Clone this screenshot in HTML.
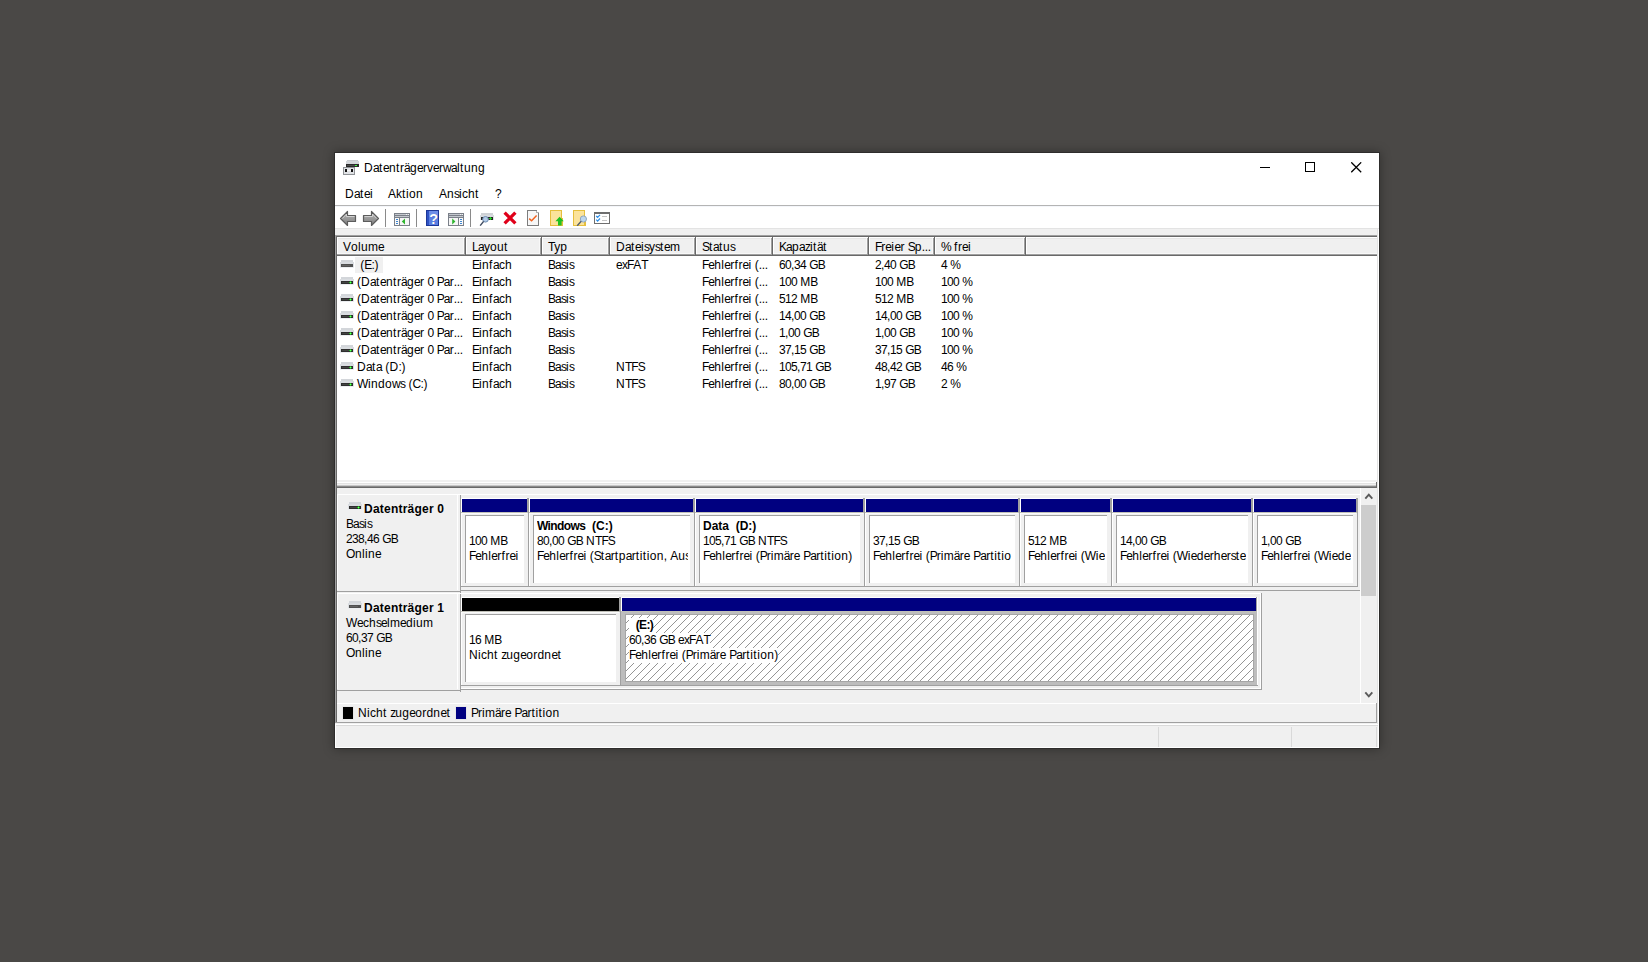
<!DOCTYPE html>
<html><head><meta charset="utf-8"><style>
html,body{margin:0;padding:0;width:1648px;height:962px;overflow:hidden;background:#4a4846;}
body>div,body>svg{position:absolute;}
.t{position:absolute;font-family:"Liberation Sans",sans-serif;font-size:12px;line-height:15px;color:#000;white-space:pre;}
</style></head><body>
<div style="left:334px;top:152px;width:1046px;height:597px;background:#2e2d2c;box-shadow:0 0 10px rgba(0,0,0,.35);"></div>
<div style="left:335px;top:153px;width:1044px;height:595px;background:#fff;"></div>
<svg style="left:343px;top:160px" width="16" height="16" viewBox="0 0 16 16" shape-rendering="crispEdges">
<rect x="4" y="0" width="11" height="1" fill="#c9ccd0"/>
<rect x="3" y="1" width="13" height="3" fill="#d4d7db"/>
<rect x="3" y="4" width="13" height="3" fill="#2b2b2b"/>
<rect x="4" y="5" width="8" height="1" fill="#4a4a4a"/>
<rect x="12" y="5" width="2" height="1" fill="#3dff3d"/>
<rect x="0" y="7" width="12" height="8" fill="#8f9296"/>
<rect x="1" y="8" width="10" height="6" fill="#e1e3e6"/>
<rect x="2" y="9" width="2" height="3" fill="#111"/>
<rect x="8" y="9" width="2" height="3" fill="#111"/>
<rect x="4" y="10" width="4" height="1" fill="#f8f8f8"/>
</svg>
<div class="t" style="left:364px;top:161px;"><span style="letter-spacing:0.334px">D</span><span style="letter-spacing:-0.674px">a</span><span style="letter-spacing:0.666px">t</span><span style="letter-spacing:-0.674px">e</span><span style="letter-spacing:0.326px">n</span><span style="letter-spacing:0.666px">t</span><span style="letter-spacing:0.004px">r</span><span style="letter-spacing:-0.674px">ä</span><span style="letter-spacing:0.326px">g</span><span style="letter-spacing:-0.674px">e</span><span style="letter-spacing:0.004px">r</span>v<span style="letter-spacing:-0.674px">e</span><span style="letter-spacing:0.004px">r</span><span style="letter-spacing:-0.666px">w</span><span style="letter-spacing:-0.674px">a</span><span style="letter-spacing:0.334px">l</span><span style="letter-spacing:0.666px">t</span><span style="letter-spacing:0.326px">ung</span></div>
<div style="left:1260px;top:167px;width:10px;height:1px;background:#000;"></div>
<div style="left:1305px;top:162px;width:10px;height:10px;background:transparent;border:1px solid #000;box-sizing:border-box;"></div>
<svg style="left:1351px;top:162px" width="11" height="11" viewBox="0 0 11 11"><path d="M0.3 0.3L10.2 10.2M10.2 0.3L0.3 10.2" stroke="#000" stroke-width="1.25" fill="none"/></svg>
<div class="t" style="left:345px;top:187px;"><span style="letter-spacing:0.334px">D</span><span style="letter-spacing:-0.674px">a</span><span style="letter-spacing:0.666px">t</span><span style="letter-spacing:-0.674px">e</span><span style="letter-spacing:0.334px">i</span></div>
<div class="t" style="left:388px;top:187px;"><span style="letter-spacing:-0.004px">A</span>k<span style="letter-spacing:0.666px">t</span><span style="letter-spacing:0.334px">i</span><span style="letter-spacing:0.326px">on</span></div>
<div class="t" style="left:439px;top:187px;"><span style="letter-spacing:-0.004px">A</span><span style="letter-spacing:0.326px">n</span><span style="letter-spacing:-1px">s</span><span style="letter-spacing:0.334px">i</span>c<span style="letter-spacing:0.326px">h</span><span style="letter-spacing:0.666px">t</span></div>
<div class="t" style="left:495px;top:187px;"><span style="letter-spacing:-1.0px">?</span></div>
<div style="left:335px;top:205px;width:1044px;height:1px;background:#b4b4b4;"></div>
<div style="left:335px;top:206px;width:1044px;height:1px;background:#f4f6fa;"></div>
<div style="left:335px;top:228px;width:1044px;height:1px;background:#e3e3e3;"></div>
<div style="left:335px;top:229px;width:1044px;height:519px;background:#f0f0f0;"></div>
<div style="left:1378px;top:229px;width:1px;height:519px;background:#fff;"></div>
<div style="left:385px;top:209px;width:1px;height:18px;background:#8a8a8a;"></div>
<div style="left:416px;top:209px;width:1px;height:18px;background:#8a8a8a;"></div>
<div style="left:470px;top:209px;width:1px;height:18px;background:#8a8a8a;"></div>
<svg style="left:339px;top:210px" width="18" height="17" viewBox="0 0 18 17">
<defs><linearGradient id="ga" x1="0" y1="0" x2="0" y2="1"><stop offset="0" stop-color="#b8b8b8"/><stop offset="1" stop-color="#7c7c7c"/></linearGradient></defs>
<path d="M1.5 8.5L8.5 1.5V5.5H16.5V11.5H8.5V15.5Z" fill="url(#ga)" stroke="#5c5c5c" stroke-width="1.2" stroke-linejoin="round"/>
<path d="M3.3 8.5L7.5 4.2V6.5H15.5" fill="none" stroke="#dcdcdc" stroke-width="0.8"/>
</svg>
<svg style="left:362px;top:210px" width="18" height="17" viewBox="0 0 18 17">
<path d="M16.5 8.5L9.5 1.5V5.5H1.5V11.5H9.5V15.5Z" fill="url(#ga)" stroke="#5c5c5c" stroke-width="1.2" stroke-linejoin="round"/>
<path d="M14.7 8.5L10.5 4.2V6.5H2.5" fill="none" stroke="#dcdcdc" stroke-width="0.8"/>
</svg>
<svg style="left:394px;top:213px" width="16" height="13" viewBox="0 0 16 13" shape-rendering="crispEdges">
<rect x="0" y="0" width="16" height="13" fill="#7b8089"/>
<rect x="1" y="1" width="14" height="1" fill="#c3c7cd"/>
<rect x="12" y="1" width="1" height="1" fill="#f4f4f4"/><rect x="14" y="1" width="1" height="1" fill="#f4f4f4"/>
<rect x="1" y="3" width="14" height="1" fill="#c3c7cd"/>
<rect x="1" y="5" width="4" height="7" fill="#fafafa"/>
<rect x="2" y="6" width="2" height="1" fill="#3f86d0"/><rect x="2" y="8" width="2" height="1" fill="#3f86d0"/><rect x="2" y="10" width="2" height="1" fill="#3f86d0"/>
<rect x="6" y="5" width="9" height="7" fill="#f6f6f6"/>
<path d="M7.8 8.5L11 5.6V11.4Z" fill="#2fb52f" shape-rendering="auto"/>
</svg>
<svg style="left:426px;top:210px" width="13" height="16" viewBox="0 0 13 16" shape-rendering="crispEdges">
<rect x="0" y="0" width="13" height="16" fill="#1d3799"/>
<rect x="1" y="1" width="2" height="14" fill="#2f53c4"/>
<rect x="3" y="1" width="9" height="14" fill="#5b7fe2"/>
<rect x="3" y="1" width="9" height="5" fill="#6e8ee8"/>
<text x="8.3" y="14.2" font-family="Liberation Sans" font-weight="bold" font-size="14.5" fill="#1b2a70" text-anchor="middle" shape-rendering="auto" opacity=".55">?</text>
<text x="7.6" y="13.6" font-family="Liberation Sans" font-weight="bold" font-size="14.5" fill="#fff" text-anchor="middle" shape-rendering="auto">?</text>
</svg>
<svg style="left:448px;top:213px" width="16" height="13" viewBox="0 0 16 13" shape-rendering="crispEdges">
<rect x="0" y="0" width="16" height="13" fill="#7b8089"/>
<rect x="1" y="1" width="14" height="1" fill="#c3c7cd"/>
<rect x="12" y="1" width="1" height="1" fill="#f4f4f4"/><rect x="14" y="1" width="1" height="1" fill="#f4f4f4"/>
<rect x="1" y="3" width="14" height="1" fill="#c3c7cd"/>
<rect x="11" y="5" width="4" height="7" fill="#fafafa"/>
<rect x="12" y="6" width="2" height="1" fill="#3f86d0"/><rect x="12" y="8" width="2" height="1" fill="#3f86d0"/><rect x="12" y="10" width="2" height="1" fill="#3f86d0"/>
<rect x="1" y="5" width="9" height="7" fill="#f6f6f6"/>
<path d="M4.2 5.6L7.4 8.5L4.2 11.4Z" fill="#2fb52f" shape-rendering="auto"/>
</svg>
<svg style="left:479px;top:212px" width="16" height="16" viewBox="0 0 16 16">
<rect x="2" y="1" width="12" height="2" fill="#cfd2d6" shape-rendering="crispEdges"/>
<rect x="1" y="3" width="14" height="2" fill="#d8dbdf" shape-rendering="crispEdges"/>
<rect x="1" y="5" width="14" height="3" fill="#dfe2e5" shape-rendering="crispEdges"/>
<rect x="2" y="5" width="12" height="3" fill="#262626" shape-rendering="crispEdges"/>
<rect x="10" y="6" width="3" height="1" fill="#22d022" shape-rendering="crispEdges"/><rect x="11" y="5" width="1" height="3" fill="#22d022" shape-rendering="crispEdges"/>
<circle cx="6.5" cy="7.3" r="2.8" fill="#b4cbe6" stroke="#6d8db3" stroke-width="1"/>
<path d="M4.6 9.4L1.2 13.6" stroke="#3e4a60" stroke-width="1.5"/>
</svg>
<svg style="left:502px;top:210px" width="16" height="16" viewBox="0 0 16 16"><path d="M2.6 2.6L13.4 13.4M13.4 2.6L2.6 13.4" stroke="#e0001a" stroke-width="3.3" stroke-linecap="butt"/></svg>
<svg style="left:527px;top:210px" width="12" height="16" viewBox="0 0 12 16" shape-rendering="crispEdges">
<path d="M0.5 0.5H9.5L11.5 2.5V15.5H0.5Z" fill="#f7f7f7" stroke="#7d7d7d" stroke-width="1"/>
<path d="M9.5 0.5V2.5H11.5" fill="#fff" stroke="#b0b0b0" stroke-width="1"/>
<path d="M2.2 8.6L4.6 10.8L9.6 5.6" fill="none" stroke="#f2621e" stroke-width="1.5" shape-rendering="auto"/>
</svg>
<svg style="left:550px;top:210px" width="15" height="16" viewBox="0 0 15 16" shape-rendering="crispEdges">
<rect x="0" y="0" width="12" height="16" fill="#e6bf3c"/>
<rect x="1" y="1" width="10" height="14" fill="#fbe39b"/>
<rect x="11" y="8" width="2" height="8" fill="#e6bf3c"/>
<path d="M9.6 6.8L13.8 11.2H11.6V15.6H8.0V11.2H5.4Z" fill="#1fc11f" shape-rendering="auto"/>
</svg>
<svg style="left:573px;top:210px" width="14" height="16" viewBox="0 0 14 16">
<rect x="0" y="0" width="12" height="16" fill="#e6bf3c" shape-rendering="crispEdges"/>
<rect x="1" y="1" width="10" height="14" fill="#fbe39b" shape-rendering="crispEdges"/>
<rect x="11" y="9" width="2" height="7" fill="#e6bf3c" shape-rendering="crispEdges"/>
<circle cx="10.4" cy="9" r="3.1" fill="#bcd6ee" stroke="#8da6bf" stroke-width="1"/>
<path d="M8.2 11.3L4.2 15.8" stroke="#4f5a6e" stroke-width="1.3"/>
</svg>
<svg style="left:594px;top:212px" width="16" height="12" viewBox="0 0 16 12" shape-rendering="crispEdges">
<rect x="0" y="0" width="16" height="12" fill="#6e6e6e"/>
<rect x="1" y="2" width="14" height="9" fill="#fff"/>
<path d="M2.2 4L3.6 5.4L6 2.8M2.2 7.7L3.6 9.1L6 6.5" fill="none" stroke="#2d8fe8" stroke-width="1.2" shape-rendering="auto"/>
<rect x="8" y="4" width="5" height="1" fill="#c4c4c4"/>
<rect x="8" y="8" width="5" height="1" fill="#c4c4c4"/>
</svg>
<div style="left:335px;top:235px;width:1043px;height:1px;background:#a0a0a0;"></div>
<div style="left:336px;top:236px;width:1041px;height:1px;background:#696969;"></div>
<div style="left:335px;top:235px;width:1px;height:488px;background:#a0a0a0;"></div>
<div style="left:336px;top:236px;width:1px;height:487px;background:#696969;"></div>
<div style="left:1377px;top:229px;width:1px;height:495px;background:#e3e3e3;"></div>
<div style="left:337px;top:237px;width:1040px;height:243px;background:#fff;"></div>
<div style="left:337px;top:237px;width:1040px;height:19px;background:#f0f0f0;"></div>
<div style="left:337px;top:237px;width:1040px;height:1px;background:#fff;"></div>
<div style="left:338px;top:238px;width:1039px;height:1px;background:#e6e6e6;"></div>
<div style="left:337px;top:253px;width:1040px;height:1px;background:#f8f8f8;"></div>
<div style="left:337px;top:254px;width:1040px;height:1px;background:#a0a0a0;"></div>
<div style="left:337px;top:255px;width:1040px;height:1px;background:#696969;"></div>
<div style="left:337px;top:237px;width:1px;height:17px;background:#fff;"></div>
<div style="left:463px;top:238px;width:1px;height:16px;background:#f8f8f8;"></div>
<div style="left:464px;top:238px;width:1px;height:17px;background:#a0a0a0;"></div>
<div style="left:465px;top:237px;width:1px;height:19px;background:#696969;"></div>
<div style="left:466px;top:237px;width:1px;height:17px;background:#fff;"></div>
<div style="left:539px;top:238px;width:1px;height:16px;background:#f8f8f8;"></div>
<div style="left:540px;top:238px;width:1px;height:17px;background:#a0a0a0;"></div>
<div style="left:541px;top:237px;width:1px;height:19px;background:#696969;"></div>
<div style="left:542px;top:237px;width:1px;height:17px;background:#fff;"></div>
<div style="left:607px;top:238px;width:1px;height:16px;background:#f8f8f8;"></div>
<div style="left:608px;top:238px;width:1px;height:17px;background:#a0a0a0;"></div>
<div style="left:609px;top:237px;width:1px;height:19px;background:#696969;"></div>
<div style="left:610px;top:237px;width:1px;height:17px;background:#fff;"></div>
<div style="left:693px;top:238px;width:1px;height:16px;background:#f8f8f8;"></div>
<div style="left:694px;top:238px;width:1px;height:17px;background:#a0a0a0;"></div>
<div style="left:695px;top:237px;width:1px;height:19px;background:#696969;"></div>
<div style="left:696px;top:237px;width:1px;height:17px;background:#fff;"></div>
<div style="left:770px;top:238px;width:1px;height:16px;background:#f8f8f8;"></div>
<div style="left:771px;top:238px;width:1px;height:17px;background:#a0a0a0;"></div>
<div style="left:772px;top:237px;width:1px;height:19px;background:#696969;"></div>
<div style="left:773px;top:237px;width:1px;height:17px;background:#fff;"></div>
<div style="left:866px;top:238px;width:1px;height:16px;background:#f8f8f8;"></div>
<div style="left:867px;top:238px;width:1px;height:17px;background:#a0a0a0;"></div>
<div style="left:868px;top:237px;width:1px;height:19px;background:#696969;"></div>
<div style="left:869px;top:237px;width:1px;height:17px;background:#fff;"></div>
<div style="left:932px;top:238px;width:1px;height:16px;background:#f8f8f8;"></div>
<div style="left:933px;top:238px;width:1px;height:17px;background:#a0a0a0;"></div>
<div style="left:934px;top:237px;width:1px;height:19px;background:#696969;"></div>
<div style="left:935px;top:237px;width:1px;height:17px;background:#fff;"></div>
<div style="left:1023px;top:238px;width:1px;height:16px;background:#f8f8f8;"></div>
<div style="left:1024px;top:238px;width:1px;height:17px;background:#a0a0a0;"></div>
<div style="left:1025px;top:237px;width:1px;height:19px;background:#696969;"></div>
<div style="left:1026px;top:237px;width:1px;height:17px;background:#fff;"></div>
<div class="t" style="left:343px;top:240px;"><span style="letter-spacing:-0.004px">V</span><span style="letter-spacing:0.326px">o</span><span style="letter-spacing:0.334px">l</span><span style="letter-spacing:0.326px">u</span><span style="letter-spacing:0.004px">m</span><span style="letter-spacing:-0.674px">e</span></div>
<div class="t" style="left:472px;top:240px;"><span style="letter-spacing:-0.674px">La</span>y<span style="letter-spacing:0.326px">ou</span><span style="letter-spacing:0.666px">t</span></div>
<div class="t" style="left:548px;top:240px;"><span style="letter-spacing:-1.0px">T</span>y<span style="letter-spacing:0.326px">p</span></div>
<div class="t" style="left:616px;top:240px;"><span style="letter-spacing:0.334px">D</span><span style="letter-spacing:-0.674px">a</span><span style="letter-spacing:0.666px">t</span><span style="letter-spacing:-0.674px">e</span><span style="letter-spacing:0.334px">i</span><span style="letter-spacing:-1px">s</span>y<span style="letter-spacing:-1px">s</span><span style="letter-spacing:0.666px">t</span><span style="letter-spacing:-0.674px">e</span><span style="letter-spacing:0.004px">m</span></div>
<div class="t" style="left:702px;top:240px;"><span style="letter-spacing:-1.0px">S</span><span style="letter-spacing:0.666px">t</span><span style="letter-spacing:-0.674px">a</span><span style="letter-spacing:0.666px">t</span><span style="letter-spacing:0.326px">u</span><span style="letter-spacing:-1px">s</span></div>
<div class="t" style="left:779px;top:240px;"><span style="letter-spacing:-1.0px">K</span><span style="letter-spacing:-0.674px">a</span><span style="letter-spacing:0.326px">p</span><span style="letter-spacing:-0.674px">a</span><span style="letter-spacing:-1px">z</span><span style="letter-spacing:0.334px">i</span><span style="letter-spacing:0.666px">t</span><span style="letter-spacing:-0.674px">ä</span><span style="letter-spacing:0.666px">t</span></div>
<div class="t" style="left:875px;top:240px;"><span style="letter-spacing:-1.0px">F</span><span style="letter-spacing:0.004px">r</span><span style="letter-spacing:-0.674px">e</span><span style="letter-spacing:0.334px">i</span><span style="letter-spacing:-0.674px">e</span><span style="letter-spacing:0.004px">r</span> <span style="letter-spacing:-1.0px">S</span><span style="letter-spacing:0.326px">p</span><span style="letter-spacing:-0.334px">...</span></div>
<div class="t" style="left:941px;top:240px;"><span style="letter-spacing:-1.0px">%</span> <span style="letter-spacing:0.666px">f</span><span style="letter-spacing:0.004px">r</span><span style="letter-spacing:-0.674px">e</span><span style="letter-spacing:0.334px">i</span></div>
<div style="left:355px;top:257px;width:28px;height:16px;background:#f0f0f0;"></div>
<svg style="left:340px;top:260px" width="14" height="8" viewBox="0 0 14 8" shape-rendering="crispEdges">
<rect x="1" y="0" width="12" height="2" fill="#d3d6da"/>
<rect x="0" y="2" width="14" height="2" fill="#d9dce0"/>
<rect x="0" y="4" width="14" height="3" fill="#dcdfe3"/>
<rect x="1" y="4" width="12" height="3" fill="#505050"/>
<rect x="2" y="5" width="8" height="1" fill="#636363"/>
<rect x="0" y="7" width="14" height="1" fill="#eceef1"/></svg>
<div class="t" style="left:357px;top:258px;"> <span style="letter-spacing:0.004px">(</span><span style="letter-spacing:-1.0px">E</span><span style="letter-spacing:-0.334px">:</span><span style="letter-spacing:0.004px">)</span></div>
<div class="t" style="left:472px;top:258px;"><span style="letter-spacing:-1.0px">E</span><span style="letter-spacing:0.334px">i</span><span style="letter-spacing:0.326px">n</span><span style="letter-spacing:0.666px">f</span><span style="letter-spacing:-0.674px">a</span>c<span style="letter-spacing:0.326px">h</span></div>
<div class="t" style="left:548px;top:258px;"><span style="letter-spacing:-1.0px">B</span><span style="letter-spacing:-0.674px">a</span><span style="letter-spacing:-1px">s</span><span style="letter-spacing:0.334px">i</span><span style="letter-spacing:-1px">s</span></div>
<div class="t" style="left:616px;top:258px;"><span style="letter-spacing:-0.674px">e</span><span style="letter-spacing:-1px">xF</span><span style="letter-spacing:-0.004px">A</span><span style="letter-spacing:-1.0px">T</span></div>
<div class="t" style="left:702px;top:258px;"><span style="letter-spacing:-1.0px">F</span><span style="letter-spacing:-0.674px">e</span><span style="letter-spacing:0.326px">h</span><span style="letter-spacing:0.334px">l</span><span style="letter-spacing:-0.674px">e</span><span style="letter-spacing:0.004px">r</span><span style="letter-spacing:0.666px">f</span><span style="letter-spacing:0.004px">r</span><span style="letter-spacing:-0.674px">e</span><span style="letter-spacing:0.334px">i</span> <span style="letter-spacing:0.004px">(</span><span style="letter-spacing:-0.334px">...</span></div>
<div class="t" style="left:779px;top:258px;"><span style="letter-spacing:-0.674px">60</span><span style="letter-spacing:-0.334px">,</span><span style="letter-spacing:-0.674px">34</span> <span style="letter-spacing:-1.0px">GB</span></div>
<div class="t" style="left:875px;top:258px;"><span style="letter-spacing:-0.674px">2</span><span style="letter-spacing:-0.334px">,</span><span style="letter-spacing:-0.674px">40</span> <span style="letter-spacing:-1.0px">GB</span></div>
<div class="t" style="left:941px;top:258px;"><span style="letter-spacing:-0.674px">4</span> <span style="letter-spacing:-1.0px">%</span></div>
<svg style="left:340px;top:277px" width="14" height="8" viewBox="0 0 14 8" shape-rendering="crispEdges">
<rect x="1" y="0" width="12" height="2" fill="#d3d6da"/>
<rect x="0" y="2" width="14" height="2" fill="#d9dce0"/>
<rect x="0" y="4" width="14" height="3" fill="#dcdfe3"/>
<rect x="1" y="4" width="12" height="3" fill="#2e2e2e"/>
<rect x="2" y="5" width="8" height="1" fill="#444"/>
<rect x="0" y="7" width="14" height="1" fill="#eceef1"/><rect x="9" y="5" width="3" height="1" fill="#22c022"/><rect x="10" y="4" width="1" height="3" fill="#22c022"/><rect x="10" y="5" width="1" height="1" fill="#6cff6c"/></svg>
<div class="t" style="left:357px;top:275px;"><span style="letter-spacing:0.004px">(</span><span style="letter-spacing:0.334px">D</span><span style="letter-spacing:-0.674px">a</span><span style="letter-spacing:0.666px">t</span><span style="letter-spacing:-0.674px">e</span><span style="letter-spacing:0.326px">n</span><span style="letter-spacing:0.666px">t</span><span style="letter-spacing:0.004px">r</span><span style="letter-spacing:-0.674px">ä</span><span style="letter-spacing:0.326px">g</span><span style="letter-spacing:-0.674px">e</span><span style="letter-spacing:0.004px">r</span> <span style="letter-spacing:-0.674px">0</span> <span style="letter-spacing:-1.0px">P</span><span style="letter-spacing:-0.674px">a</span><span style="letter-spacing:0.004px">r</span><span style="letter-spacing:-0.334px">...</span></div>
<div class="t" style="left:472px;top:275px;"><span style="letter-spacing:-1.0px">E</span><span style="letter-spacing:0.334px">i</span><span style="letter-spacing:0.326px">n</span><span style="letter-spacing:0.666px">f</span><span style="letter-spacing:-0.674px">a</span>c<span style="letter-spacing:0.326px">h</span></div>
<div class="t" style="left:548px;top:275px;"><span style="letter-spacing:-1.0px">B</span><span style="letter-spacing:-0.674px">a</span><span style="letter-spacing:-1px">s</span><span style="letter-spacing:0.334px">i</span><span style="letter-spacing:-1px">s</span></div>
<div class="t" style="left:702px;top:275px;"><span style="letter-spacing:-1.0px">F</span><span style="letter-spacing:-0.674px">e</span><span style="letter-spacing:0.326px">h</span><span style="letter-spacing:0.334px">l</span><span style="letter-spacing:-0.674px">e</span><span style="letter-spacing:0.004px">r</span><span style="letter-spacing:0.666px">f</span><span style="letter-spacing:0.004px">r</span><span style="letter-spacing:-0.674px">e</span><span style="letter-spacing:0.334px">i</span> <span style="letter-spacing:0.004px">(</span><span style="letter-spacing:-0.334px">...</span></div>
<div class="t" style="left:779px;top:275px;"><span style="letter-spacing:-0.674px">100</span> <span style="letter-spacing:0.004px">M</span><span style="letter-spacing:-1.0px">B</span></div>
<div class="t" style="left:875px;top:275px;"><span style="letter-spacing:-0.674px">100</span> <span style="letter-spacing:0.004px">M</span><span style="letter-spacing:-1.0px">B</span></div>
<div class="t" style="left:941px;top:275px;"><span style="letter-spacing:-0.674px">100</span> <span style="letter-spacing:-1.0px">%</span></div>
<svg style="left:340px;top:294px" width="14" height="8" viewBox="0 0 14 8" shape-rendering="crispEdges">
<rect x="1" y="0" width="12" height="2" fill="#d3d6da"/>
<rect x="0" y="2" width="14" height="2" fill="#d9dce0"/>
<rect x="0" y="4" width="14" height="3" fill="#dcdfe3"/>
<rect x="1" y="4" width="12" height="3" fill="#2e2e2e"/>
<rect x="2" y="5" width="8" height="1" fill="#444"/>
<rect x="0" y="7" width="14" height="1" fill="#eceef1"/><rect x="9" y="5" width="3" height="1" fill="#22c022"/><rect x="10" y="4" width="1" height="3" fill="#22c022"/><rect x="10" y="5" width="1" height="1" fill="#6cff6c"/></svg>
<div class="t" style="left:357px;top:292px;"><span style="letter-spacing:0.004px">(</span><span style="letter-spacing:0.334px">D</span><span style="letter-spacing:-0.674px">a</span><span style="letter-spacing:0.666px">t</span><span style="letter-spacing:-0.674px">e</span><span style="letter-spacing:0.326px">n</span><span style="letter-spacing:0.666px">t</span><span style="letter-spacing:0.004px">r</span><span style="letter-spacing:-0.674px">ä</span><span style="letter-spacing:0.326px">g</span><span style="letter-spacing:-0.674px">e</span><span style="letter-spacing:0.004px">r</span> <span style="letter-spacing:-0.674px">0</span> <span style="letter-spacing:-1.0px">P</span><span style="letter-spacing:-0.674px">a</span><span style="letter-spacing:0.004px">r</span><span style="letter-spacing:-0.334px">...</span></div>
<div class="t" style="left:472px;top:292px;"><span style="letter-spacing:-1.0px">E</span><span style="letter-spacing:0.334px">i</span><span style="letter-spacing:0.326px">n</span><span style="letter-spacing:0.666px">f</span><span style="letter-spacing:-0.674px">a</span>c<span style="letter-spacing:0.326px">h</span></div>
<div class="t" style="left:548px;top:292px;"><span style="letter-spacing:-1.0px">B</span><span style="letter-spacing:-0.674px">a</span><span style="letter-spacing:-1px">s</span><span style="letter-spacing:0.334px">i</span><span style="letter-spacing:-1px">s</span></div>
<div class="t" style="left:702px;top:292px;"><span style="letter-spacing:-1.0px">F</span><span style="letter-spacing:-0.674px">e</span><span style="letter-spacing:0.326px">h</span><span style="letter-spacing:0.334px">l</span><span style="letter-spacing:-0.674px">e</span><span style="letter-spacing:0.004px">r</span><span style="letter-spacing:0.666px">f</span><span style="letter-spacing:0.004px">r</span><span style="letter-spacing:-0.674px">e</span><span style="letter-spacing:0.334px">i</span> <span style="letter-spacing:0.004px">(</span><span style="letter-spacing:-0.334px">...</span></div>
<div class="t" style="left:779px;top:292px;"><span style="letter-spacing:-0.674px">512</span> <span style="letter-spacing:0.004px">M</span><span style="letter-spacing:-1.0px">B</span></div>
<div class="t" style="left:875px;top:292px;"><span style="letter-spacing:-0.674px">512</span> <span style="letter-spacing:0.004px">M</span><span style="letter-spacing:-1.0px">B</span></div>
<div class="t" style="left:941px;top:292px;"><span style="letter-spacing:-0.674px">100</span> <span style="letter-spacing:-1.0px">%</span></div>
<svg style="left:340px;top:311px" width="14" height="8" viewBox="0 0 14 8" shape-rendering="crispEdges">
<rect x="1" y="0" width="12" height="2" fill="#d3d6da"/>
<rect x="0" y="2" width="14" height="2" fill="#d9dce0"/>
<rect x="0" y="4" width="14" height="3" fill="#dcdfe3"/>
<rect x="1" y="4" width="12" height="3" fill="#2e2e2e"/>
<rect x="2" y="5" width="8" height="1" fill="#444"/>
<rect x="0" y="7" width="14" height="1" fill="#eceef1"/><rect x="9" y="5" width="3" height="1" fill="#22c022"/><rect x="10" y="4" width="1" height="3" fill="#22c022"/><rect x="10" y="5" width="1" height="1" fill="#6cff6c"/></svg>
<div class="t" style="left:357px;top:309px;"><span style="letter-spacing:0.004px">(</span><span style="letter-spacing:0.334px">D</span><span style="letter-spacing:-0.674px">a</span><span style="letter-spacing:0.666px">t</span><span style="letter-spacing:-0.674px">e</span><span style="letter-spacing:0.326px">n</span><span style="letter-spacing:0.666px">t</span><span style="letter-spacing:0.004px">r</span><span style="letter-spacing:-0.674px">ä</span><span style="letter-spacing:0.326px">g</span><span style="letter-spacing:-0.674px">e</span><span style="letter-spacing:0.004px">r</span> <span style="letter-spacing:-0.674px">0</span> <span style="letter-spacing:-1.0px">P</span><span style="letter-spacing:-0.674px">a</span><span style="letter-spacing:0.004px">r</span><span style="letter-spacing:-0.334px">...</span></div>
<div class="t" style="left:472px;top:309px;"><span style="letter-spacing:-1.0px">E</span><span style="letter-spacing:0.334px">i</span><span style="letter-spacing:0.326px">n</span><span style="letter-spacing:0.666px">f</span><span style="letter-spacing:-0.674px">a</span>c<span style="letter-spacing:0.326px">h</span></div>
<div class="t" style="left:548px;top:309px;"><span style="letter-spacing:-1.0px">B</span><span style="letter-spacing:-0.674px">a</span><span style="letter-spacing:-1px">s</span><span style="letter-spacing:0.334px">i</span><span style="letter-spacing:-1px">s</span></div>
<div class="t" style="left:702px;top:309px;"><span style="letter-spacing:-1.0px">F</span><span style="letter-spacing:-0.674px">e</span><span style="letter-spacing:0.326px">h</span><span style="letter-spacing:0.334px">l</span><span style="letter-spacing:-0.674px">e</span><span style="letter-spacing:0.004px">r</span><span style="letter-spacing:0.666px">f</span><span style="letter-spacing:0.004px">r</span><span style="letter-spacing:-0.674px">e</span><span style="letter-spacing:0.334px">i</span> <span style="letter-spacing:0.004px">(</span><span style="letter-spacing:-0.334px">...</span></div>
<div class="t" style="left:779px;top:309px;"><span style="letter-spacing:-0.674px">14</span><span style="letter-spacing:-0.334px">,</span><span style="letter-spacing:-0.674px">00</span> <span style="letter-spacing:-1.0px">GB</span></div>
<div class="t" style="left:875px;top:309px;"><span style="letter-spacing:-0.674px">14</span><span style="letter-spacing:-0.334px">,</span><span style="letter-spacing:-0.674px">00</span> <span style="letter-spacing:-1.0px">GB</span></div>
<div class="t" style="left:941px;top:309px;"><span style="letter-spacing:-0.674px">100</span> <span style="letter-spacing:-1.0px">%</span></div>
<svg style="left:340px;top:328px" width="14" height="8" viewBox="0 0 14 8" shape-rendering="crispEdges">
<rect x="1" y="0" width="12" height="2" fill="#d3d6da"/>
<rect x="0" y="2" width="14" height="2" fill="#d9dce0"/>
<rect x="0" y="4" width="14" height="3" fill="#dcdfe3"/>
<rect x="1" y="4" width="12" height="3" fill="#2e2e2e"/>
<rect x="2" y="5" width="8" height="1" fill="#444"/>
<rect x="0" y="7" width="14" height="1" fill="#eceef1"/><rect x="9" y="5" width="3" height="1" fill="#22c022"/><rect x="10" y="4" width="1" height="3" fill="#22c022"/><rect x="10" y="5" width="1" height="1" fill="#6cff6c"/></svg>
<div class="t" style="left:357px;top:326px;"><span style="letter-spacing:0.004px">(</span><span style="letter-spacing:0.334px">D</span><span style="letter-spacing:-0.674px">a</span><span style="letter-spacing:0.666px">t</span><span style="letter-spacing:-0.674px">e</span><span style="letter-spacing:0.326px">n</span><span style="letter-spacing:0.666px">t</span><span style="letter-spacing:0.004px">r</span><span style="letter-spacing:-0.674px">ä</span><span style="letter-spacing:0.326px">g</span><span style="letter-spacing:-0.674px">e</span><span style="letter-spacing:0.004px">r</span> <span style="letter-spacing:-0.674px">0</span> <span style="letter-spacing:-1.0px">P</span><span style="letter-spacing:-0.674px">a</span><span style="letter-spacing:0.004px">r</span><span style="letter-spacing:-0.334px">...</span></div>
<div class="t" style="left:472px;top:326px;"><span style="letter-spacing:-1.0px">E</span><span style="letter-spacing:0.334px">i</span><span style="letter-spacing:0.326px">n</span><span style="letter-spacing:0.666px">f</span><span style="letter-spacing:-0.674px">a</span>c<span style="letter-spacing:0.326px">h</span></div>
<div class="t" style="left:548px;top:326px;"><span style="letter-spacing:-1.0px">B</span><span style="letter-spacing:-0.674px">a</span><span style="letter-spacing:-1px">s</span><span style="letter-spacing:0.334px">i</span><span style="letter-spacing:-1px">s</span></div>
<div class="t" style="left:702px;top:326px;"><span style="letter-spacing:-1.0px">F</span><span style="letter-spacing:-0.674px">e</span><span style="letter-spacing:0.326px">h</span><span style="letter-spacing:0.334px">l</span><span style="letter-spacing:-0.674px">e</span><span style="letter-spacing:0.004px">r</span><span style="letter-spacing:0.666px">f</span><span style="letter-spacing:0.004px">r</span><span style="letter-spacing:-0.674px">e</span><span style="letter-spacing:0.334px">i</span> <span style="letter-spacing:0.004px">(</span><span style="letter-spacing:-0.334px">...</span></div>
<div class="t" style="left:779px;top:326px;"><span style="letter-spacing:-0.674px">1</span><span style="letter-spacing:-0.334px">,</span><span style="letter-spacing:-0.674px">00</span> <span style="letter-spacing:-1.0px">GB</span></div>
<div class="t" style="left:875px;top:326px;"><span style="letter-spacing:-0.674px">1</span><span style="letter-spacing:-0.334px">,</span><span style="letter-spacing:-0.674px">00</span> <span style="letter-spacing:-1.0px">GB</span></div>
<div class="t" style="left:941px;top:326px;"><span style="letter-spacing:-0.674px">100</span> <span style="letter-spacing:-1.0px">%</span></div>
<svg style="left:340px;top:345px" width="14" height="8" viewBox="0 0 14 8" shape-rendering="crispEdges">
<rect x="1" y="0" width="12" height="2" fill="#d3d6da"/>
<rect x="0" y="2" width="14" height="2" fill="#d9dce0"/>
<rect x="0" y="4" width="14" height="3" fill="#dcdfe3"/>
<rect x="1" y="4" width="12" height="3" fill="#2e2e2e"/>
<rect x="2" y="5" width="8" height="1" fill="#444"/>
<rect x="0" y="7" width="14" height="1" fill="#eceef1"/><rect x="9" y="5" width="3" height="1" fill="#22c022"/><rect x="10" y="4" width="1" height="3" fill="#22c022"/><rect x="10" y="5" width="1" height="1" fill="#6cff6c"/></svg>
<div class="t" style="left:357px;top:343px;"><span style="letter-spacing:0.004px">(</span><span style="letter-spacing:0.334px">D</span><span style="letter-spacing:-0.674px">a</span><span style="letter-spacing:0.666px">t</span><span style="letter-spacing:-0.674px">e</span><span style="letter-spacing:0.326px">n</span><span style="letter-spacing:0.666px">t</span><span style="letter-spacing:0.004px">r</span><span style="letter-spacing:-0.674px">ä</span><span style="letter-spacing:0.326px">g</span><span style="letter-spacing:-0.674px">e</span><span style="letter-spacing:0.004px">r</span> <span style="letter-spacing:-0.674px">0</span> <span style="letter-spacing:-1.0px">P</span><span style="letter-spacing:-0.674px">a</span><span style="letter-spacing:0.004px">r</span><span style="letter-spacing:-0.334px">...</span></div>
<div class="t" style="left:472px;top:343px;"><span style="letter-spacing:-1.0px">E</span><span style="letter-spacing:0.334px">i</span><span style="letter-spacing:0.326px">n</span><span style="letter-spacing:0.666px">f</span><span style="letter-spacing:-0.674px">a</span>c<span style="letter-spacing:0.326px">h</span></div>
<div class="t" style="left:548px;top:343px;"><span style="letter-spacing:-1.0px">B</span><span style="letter-spacing:-0.674px">a</span><span style="letter-spacing:-1px">s</span><span style="letter-spacing:0.334px">i</span><span style="letter-spacing:-1px">s</span></div>
<div class="t" style="left:702px;top:343px;"><span style="letter-spacing:-1.0px">F</span><span style="letter-spacing:-0.674px">e</span><span style="letter-spacing:0.326px">h</span><span style="letter-spacing:0.334px">l</span><span style="letter-spacing:-0.674px">e</span><span style="letter-spacing:0.004px">r</span><span style="letter-spacing:0.666px">f</span><span style="letter-spacing:0.004px">r</span><span style="letter-spacing:-0.674px">e</span><span style="letter-spacing:0.334px">i</span> <span style="letter-spacing:0.004px">(</span><span style="letter-spacing:-0.334px">...</span></div>
<div class="t" style="left:779px;top:343px;"><span style="letter-spacing:-0.674px">37</span><span style="letter-spacing:-0.334px">,</span><span style="letter-spacing:-0.674px">15</span> <span style="letter-spacing:-1.0px">GB</span></div>
<div class="t" style="left:875px;top:343px;"><span style="letter-spacing:-0.674px">37</span><span style="letter-spacing:-0.334px">,</span><span style="letter-spacing:-0.674px">15</span> <span style="letter-spacing:-1.0px">GB</span></div>
<div class="t" style="left:941px;top:343px;"><span style="letter-spacing:-0.674px">100</span> <span style="letter-spacing:-1.0px">%</span></div>
<svg style="left:340px;top:362px" width="14" height="8" viewBox="0 0 14 8" shape-rendering="crispEdges">
<rect x="1" y="0" width="12" height="2" fill="#d3d6da"/>
<rect x="0" y="2" width="14" height="2" fill="#d9dce0"/>
<rect x="0" y="4" width="14" height="3" fill="#dcdfe3"/>
<rect x="1" y="4" width="12" height="3" fill="#2e2e2e"/>
<rect x="2" y="5" width="8" height="1" fill="#444"/>
<rect x="0" y="7" width="14" height="1" fill="#eceef1"/><rect x="9" y="5" width="3" height="1" fill="#22c022"/><rect x="10" y="4" width="1" height="3" fill="#22c022"/><rect x="10" y="5" width="1" height="1" fill="#6cff6c"/></svg>
<div class="t" style="left:357px;top:360px;"><span style="letter-spacing:0.334px">D</span><span style="letter-spacing:-0.674px">a</span><span style="letter-spacing:0.666px">t</span><span style="letter-spacing:-0.674px">a</span> <span style="letter-spacing:0.004px">(</span><span style="letter-spacing:0.334px">D</span><span style="letter-spacing:-0.334px">:</span><span style="letter-spacing:0.004px">)</span></div>
<div class="t" style="left:472px;top:360px;"><span style="letter-spacing:-1.0px">E</span><span style="letter-spacing:0.334px">i</span><span style="letter-spacing:0.326px">n</span><span style="letter-spacing:0.666px">f</span><span style="letter-spacing:-0.674px">a</span>c<span style="letter-spacing:0.326px">h</span></div>
<div class="t" style="left:548px;top:360px;"><span style="letter-spacing:-1.0px">B</span><span style="letter-spacing:-0.674px">a</span><span style="letter-spacing:-1px">s</span><span style="letter-spacing:0.334px">i</span><span style="letter-spacing:-1px">s</span></div>
<div class="t" style="left:616px;top:360px;"><span style="letter-spacing:0.334px">N</span><span style="letter-spacing:-1.0px">TFS</span></div>
<div class="t" style="left:702px;top:360px;"><span style="letter-spacing:-1.0px">F</span><span style="letter-spacing:-0.674px">e</span><span style="letter-spacing:0.326px">h</span><span style="letter-spacing:0.334px">l</span><span style="letter-spacing:-0.674px">e</span><span style="letter-spacing:0.004px">r</span><span style="letter-spacing:0.666px">f</span><span style="letter-spacing:0.004px">r</span><span style="letter-spacing:-0.674px">e</span><span style="letter-spacing:0.334px">i</span> <span style="letter-spacing:0.004px">(</span><span style="letter-spacing:-0.334px">...</span></div>
<div class="t" style="left:779px;top:360px;"><span style="letter-spacing:-0.674px">105</span><span style="letter-spacing:-0.334px">,</span><span style="letter-spacing:-0.674px">71</span> <span style="letter-spacing:-1.0px">GB</span></div>
<div class="t" style="left:875px;top:360px;"><span style="letter-spacing:-0.674px">48</span><span style="letter-spacing:-0.334px">,</span><span style="letter-spacing:-0.674px">42</span> <span style="letter-spacing:-1.0px">GB</span></div>
<div class="t" style="left:941px;top:360px;"><span style="letter-spacing:-0.674px">46</span> <span style="letter-spacing:-1.0px">%</span></div>
<svg style="left:340px;top:379px" width="14" height="8" viewBox="0 0 14 8" shape-rendering="crispEdges">
<rect x="1" y="0" width="12" height="2" fill="#d3d6da"/>
<rect x="0" y="2" width="14" height="2" fill="#d9dce0"/>
<rect x="0" y="4" width="14" height="3" fill="#dcdfe3"/>
<rect x="1" y="4" width="12" height="3" fill="#2e2e2e"/>
<rect x="2" y="5" width="8" height="1" fill="#444"/>
<rect x="0" y="7" width="14" height="1" fill="#eceef1"/><rect x="9" y="5" width="3" height="1" fill="#22c022"/><rect x="10" y="4" width="1" height="3" fill="#22c022"/><rect x="10" y="5" width="1" height="1" fill="#6cff6c"/></svg>
<div class="t" style="left:357px;top:377px;"><span style="letter-spacing:-0.326px">W</span><span style="letter-spacing:0.334px">i</span><span style="letter-spacing:0.326px">ndo</span><span style="letter-spacing:-0.666px">w</span><span style="letter-spacing:-1px">s</span> <span style="letter-spacing:0.004px">(</span><span style="letter-spacing:-0.666px">C</span><span style="letter-spacing:-0.334px">:</span><span style="letter-spacing:0.004px">)</span></div>
<div class="t" style="left:472px;top:377px;"><span style="letter-spacing:-1.0px">E</span><span style="letter-spacing:0.334px">i</span><span style="letter-spacing:0.326px">n</span><span style="letter-spacing:0.666px">f</span><span style="letter-spacing:-0.674px">a</span>c<span style="letter-spacing:0.326px">h</span></div>
<div class="t" style="left:548px;top:377px;"><span style="letter-spacing:-1.0px">B</span><span style="letter-spacing:-0.674px">a</span><span style="letter-spacing:-1px">s</span><span style="letter-spacing:0.334px">i</span><span style="letter-spacing:-1px">s</span></div>
<div class="t" style="left:616px;top:377px;"><span style="letter-spacing:0.334px">N</span><span style="letter-spacing:-1.0px">TFS</span></div>
<div class="t" style="left:702px;top:377px;"><span style="letter-spacing:-1.0px">F</span><span style="letter-spacing:-0.674px">e</span><span style="letter-spacing:0.326px">h</span><span style="letter-spacing:0.334px">l</span><span style="letter-spacing:-0.674px">e</span><span style="letter-spacing:0.004px">r</span><span style="letter-spacing:0.666px">f</span><span style="letter-spacing:0.004px">r</span><span style="letter-spacing:-0.674px">e</span><span style="letter-spacing:0.334px">i</span> <span style="letter-spacing:0.004px">(</span><span style="letter-spacing:-0.334px">...</span></div>
<div class="t" style="left:779px;top:377px;"><span style="letter-spacing:-0.674px">80</span><span style="letter-spacing:-0.334px">,</span><span style="letter-spacing:-0.674px">00</span> <span style="letter-spacing:-1.0px">GB</span></div>
<div class="t" style="left:875px;top:377px;"><span style="letter-spacing:-0.674px">1</span><span style="letter-spacing:-0.334px">,</span><span style="letter-spacing:-0.674px">97</span> <span style="letter-spacing:-1.0px">GB</span></div>
<div class="t" style="left:941px;top:377px;"><span style="letter-spacing:-0.674px">2</span> <span style="letter-spacing:-1.0px">%</span></div>
<div style="left:337px;top:480px;width:1040px;height:8px;background:#f0f0f0;"></div>
<div style="left:337px;top:482px;width:1040px;height:1px;background:#fff;"></div>
<div style="left:337px;top:483px;width:1040px;height:1px;background:#e3e3e3;"></div>
<div style="left:337px;top:485px;width:1040px;height:1px;background:#c8c8c8;"></div>
<div style="left:337px;top:486px;width:1040px;height:1px;background:#8a8a8a;"></div>
<div style="left:337px;top:487px;width:1040px;height:1px;background:#696969;"></div>
<div style="left:1376px;top:482px;width:1px;height:6px;background:#696969;"></div>
<svg style="left:0;top:0" width="0" height="0"><defs><pattern id="hatch" patternUnits="userSpaceOnUse" width="8" height="8" x="0" y="0">
<rect width="8" height="8" fill="#fff"/>
<rect x="7" y="0" width="1" height="1" fill="#959595"/><rect x="6" y="1" width="1" height="1" fill="#959595"/><rect x="5" y="2" width="1" height="1" fill="#959595"/><rect x="4" y="3" width="1" height="1" fill="#959595"/>
<rect x="3" y="4" width="1" height="1" fill="#959595"/><rect x="2" y="5" width="1" height="1" fill="#959595"/><rect x="1" y="6" width="1" height="1" fill="#959595"/><rect x="0" y="7" width="1" height="1" fill="#959595"/>
</pattern></defs></svg>
<div style="left:337px;top:494px;width:1023px;height:1px;background:#fff;"></div>
<div style="left:337px;top:494px;width:1px;height:96px;background:#fff;"></div>
<div style="left:337px;top:591px;width:123px;height:1px;background:#a0a0a0;"></div>
<div style="left:461px;top:590px;width:899px;height:1px;background:#a0a0a0;"></div>
<div style="left:460px;top:495px;width:1px;height:98px;background:#a0a0a0;"></div>
<div style="left:457px;top:494px;width:1px;height:96px;background:#fff;"></div>
<svg style="left:348px;top:502px" width="14" height="8" viewBox="0 0 14 8" shape-rendering="crispEdges">
<rect x="1" y="0" width="12" height="2" fill="#d3d6da"/>
<rect x="0" y="2" width="14" height="2" fill="#d9dce0"/>
<rect x="0" y="4" width="14" height="3" fill="#dcdfe3"/>
<rect x="1" y="4" width="12" height="3" fill="#2e2e2e"/>
<rect x="2" y="5" width="8" height="1" fill="#444"/>
<rect x="0" y="7" width="14" height="1" fill="#eceef1"/><rect x="9" y="5" width="3" height="1" fill="#22c022"/><rect x="10" y="4" width="1" height="3" fill="#22c022"/><rect x="10" y="5" width="1" height="1" fill="#6cff6c"/></svg>
<div class="t" style="left:364px;top:502px;font-weight:bold;letter-spacing:0.22px;">Datenträger 0</div>
<div class="t" style="left:346px;top:517px;"><span style="letter-spacing:-1.0px">B</span><span style="letter-spacing:-0.674px">a</span><span style="letter-spacing:-1px">s</span><span style="letter-spacing:0.334px">i</span><span style="letter-spacing:-1px">s</span></div>
<div class="t" style="left:346px;top:532px;"><span style="letter-spacing:-0.674px">238</span><span style="letter-spacing:-0.334px">,</span><span style="letter-spacing:-0.674px">46</span> <span style="letter-spacing:-1.0px">GB</span></div>
<div class="t" style="left:346px;top:547px;"><span style="letter-spacing:-0.334px">O</span><span style="letter-spacing:0.326px">n</span><span style="letter-spacing:0.334px">li</span><span style="letter-spacing:0.326px">n</span><span style="letter-spacing:-0.674px">e</span></div>
<div style="left:460px;top:498px;width:1px;height:89px;background:#a0a0a0;"></div>
<div style="left:527px;top:498px;width:1px;height:15px;background:#a0a0a0;"></div>
<div style="left:461px;top:498px;width:66px;height:1px;background:#fff;"></div>
<div style="left:461px;top:498px;width:1px;height:89px;background:#fff;"></div>
<div style="left:462px;top:499px;width:65px;height:13px;background:#000080;"></div>
<div style="left:461px;top:512px;width:67px;height:1px;background:#c0c0b8;"></div>
<div style="left:462px;top:513px;width:65px;height:1px;background:#fafafa;"></div>
<div style="left:465px;top:515px;width:59px;height:68px;background:#fff;"></div>
<div style="left:465px;top:515px;width:59px;height:1px;background:#a0a0a0;"></div>
<div style="left:465px;top:515px;width:1px;height:68px;background:#a0a0a0;"></div>
<div class="t" style="left:469px;top:534px;width:53px;overflow:hidden;"><span style="letter-spacing:-0.674px">100</span> <span style="letter-spacing:0.004px">M</span><span style="letter-spacing:-1.0px">B</span></div>
<div class="t" style="left:469px;top:549px;width:53px;overflow:hidden;"><span style="letter-spacing:-1.0px">F</span><span style="letter-spacing:-0.674px">e</span><span style="letter-spacing:0.326px">h</span><span style="letter-spacing:0.334px">l</span><span style="letter-spacing:-0.674px">e</span><span style="letter-spacing:0.004px">r</span><span style="letter-spacing:0.666px">f</span><span style="letter-spacing:0.004px">r</span><span style="letter-spacing:-0.674px">e</span><span style="letter-spacing:0.334px">i</span></div>
<div style="left:460px;top:586px;width:69px;height:1px;background:#a0a0a0;"></div>
<div style="left:528px;top:498px;width:1px;height:89px;background:#a0a0a0;"></div>
<div style="left:693px;top:498px;width:1px;height:15px;background:#a0a0a0;"></div>
<div style="left:529px;top:498px;width:164px;height:1px;background:#fff;"></div>
<div style="left:529px;top:498px;width:1px;height:89px;background:#fff;"></div>
<div style="left:530px;top:499px;width:163px;height:13px;background:#000080;"></div>
<div style="left:529px;top:512px;width:165px;height:1px;background:#c0c0b8;"></div>
<div style="left:530px;top:513px;width:163px;height:1px;background:#fafafa;"></div>
<div style="left:533px;top:515px;width:157px;height:68px;background:#fff;"></div>
<div style="left:533px;top:515px;width:157px;height:1px;background:#a0a0a0;"></div>
<div style="left:533px;top:515px;width:1px;height:68px;background:#a0a0a0;"></div>
<div class="t" style="left:537px;top:519px;font-weight:bold;width:151px;overflow:hidden;"><span style="letter-spacing:-0.6px">Windows</span>&nbsp;&nbsp;(C:)</div>
<div class="t" style="left:537px;top:534px;width:151px;overflow:hidden;"><span style="letter-spacing:-0.674px">80</span><span style="letter-spacing:-0.334px">,</span><span style="letter-spacing:-0.674px">00</span> <span style="letter-spacing:-1.0px">GB</span> <span style="letter-spacing:0.334px">N</span><span style="letter-spacing:-1.0px">TFS</span></div>
<div class="t" style="left:537px;top:549px;width:151px;overflow:hidden;"><span style="letter-spacing:-1.0px">F</span><span style="letter-spacing:-0.674px">e</span><span style="letter-spacing:0.326px">h</span><span style="letter-spacing:0.334px">l</span><span style="letter-spacing:-0.674px">e</span><span style="letter-spacing:0.004px">r</span><span style="letter-spacing:0.666px">f</span><span style="letter-spacing:0.004px">r</span><span style="letter-spacing:-0.674px">e</span><span style="letter-spacing:0.334px">i</span> <span style="letter-spacing:0.004px">(</span><span style="letter-spacing:-1.0px">S</span><span style="letter-spacing:0.666px">t</span><span style="letter-spacing:-0.674px">a</span><span style="letter-spacing:0.004px">r</span><span style="letter-spacing:0.666px">t</span><span style="letter-spacing:0.326px">p</span><span style="letter-spacing:-0.674px">a</span><span style="letter-spacing:0.004px">r</span><span style="letter-spacing:0.666px">t</span><span style="letter-spacing:0.334px">i</span><span style="letter-spacing:0.666px">t</span><span style="letter-spacing:0.334px">i</span><span style="letter-spacing:0.326px">on</span><span style="letter-spacing:-0.334px">,</span> <span style="letter-spacing:-0.004px">A</span><span style="letter-spacing:0.326px">u</span><span style="letter-spacing:-1px">s</span></div>
<div style="left:528px;top:586px;width:167px;height:1px;background:#a0a0a0;"></div>
<div style="left:694px;top:498px;width:1px;height:89px;background:#a0a0a0;"></div>
<div style="left:863px;top:498px;width:1px;height:15px;background:#a0a0a0;"></div>
<div style="left:695px;top:498px;width:168px;height:1px;background:#fff;"></div>
<div style="left:695px;top:498px;width:1px;height:89px;background:#fff;"></div>
<div style="left:696px;top:499px;width:167px;height:13px;background:#000080;"></div>
<div style="left:695px;top:512px;width:169px;height:1px;background:#c0c0b8;"></div>
<div style="left:696px;top:513px;width:167px;height:1px;background:#fafafa;"></div>
<div style="left:699px;top:515px;width:161px;height:68px;background:#fff;"></div>
<div style="left:699px;top:515px;width:161px;height:1px;background:#a0a0a0;"></div>
<div style="left:699px;top:515px;width:1px;height:68px;background:#a0a0a0;"></div>
<div class="t" style="left:703px;top:519px;font-weight:bold;width:155px;overflow:hidden;">Data&nbsp;&nbsp;(D:)</div>
<div class="t" style="left:703px;top:534px;width:155px;overflow:hidden;"><span style="letter-spacing:-0.674px">105</span><span style="letter-spacing:-0.334px">,</span><span style="letter-spacing:-0.674px">71</span> <span style="letter-spacing:-1.0px">GB</span> <span style="letter-spacing:0.334px">N</span><span style="letter-spacing:-1.0px">TFS</span></div>
<div class="t" style="left:703px;top:549px;width:155px;overflow:hidden;"><span style="letter-spacing:-1.0px">F</span><span style="letter-spacing:-0.674px">e</span><span style="letter-spacing:0.326px">h</span><span style="letter-spacing:0.334px">l</span><span style="letter-spacing:-0.674px">e</span><span style="letter-spacing:0.004px">r</span><span style="letter-spacing:0.666px">f</span><span style="letter-spacing:0.004px">r</span><span style="letter-spacing:-0.674px">e</span><span style="letter-spacing:0.334px">i</span> <span style="letter-spacing:0.004px">(</span><span style="letter-spacing:-1.0px">P</span><span style="letter-spacing:0.004px">r</span><span style="letter-spacing:0.334px">i</span><span style="letter-spacing:0.004px">m</span><span style="letter-spacing:-0.674px">ä</span><span style="letter-spacing:0.004px">r</span><span style="letter-spacing:-0.674px">e</span> <span style="letter-spacing:-1.0px">P</span><span style="letter-spacing:-0.674px">a</span><span style="letter-spacing:0.004px">r</span><span style="letter-spacing:0.666px">t</span><span style="letter-spacing:0.334px">i</span><span style="letter-spacing:0.666px">t</span><span style="letter-spacing:0.334px">i</span><span style="letter-spacing:0.326px">on</span><span style="letter-spacing:0.004px">)</span></div>
<div style="left:694px;top:586px;width:171px;height:1px;background:#a0a0a0;"></div>
<div style="left:864px;top:498px;width:1px;height:89px;background:#a0a0a0;"></div>
<div style="left:1018px;top:498px;width:1px;height:15px;background:#a0a0a0;"></div>
<div style="left:865px;top:498px;width:153px;height:1px;background:#fff;"></div>
<div style="left:865px;top:498px;width:1px;height:89px;background:#fff;"></div>
<div style="left:866px;top:499px;width:152px;height:13px;background:#000080;"></div>
<div style="left:865px;top:512px;width:154px;height:1px;background:#c0c0b8;"></div>
<div style="left:866px;top:513px;width:152px;height:1px;background:#fafafa;"></div>
<div style="left:869px;top:515px;width:146px;height:68px;background:#fff;"></div>
<div style="left:869px;top:515px;width:146px;height:1px;background:#a0a0a0;"></div>
<div style="left:869px;top:515px;width:1px;height:68px;background:#a0a0a0;"></div>
<div class="t" style="left:873px;top:534px;width:140px;overflow:hidden;"><span style="letter-spacing:-0.674px">37</span><span style="letter-spacing:-0.334px">,</span><span style="letter-spacing:-0.674px">15</span> <span style="letter-spacing:-1.0px">GB</span></div>
<div class="t" style="left:873px;top:549px;width:140px;overflow:hidden;"><span style="letter-spacing:-1.0px">F</span><span style="letter-spacing:-0.674px">e</span><span style="letter-spacing:0.326px">h</span><span style="letter-spacing:0.334px">l</span><span style="letter-spacing:-0.674px">e</span><span style="letter-spacing:0.004px">r</span><span style="letter-spacing:0.666px">f</span><span style="letter-spacing:0.004px">r</span><span style="letter-spacing:-0.674px">e</span><span style="letter-spacing:0.334px">i</span> <span style="letter-spacing:0.004px">(</span><span style="letter-spacing:-1.0px">P</span><span style="letter-spacing:0.004px">r</span><span style="letter-spacing:0.334px">i</span><span style="letter-spacing:0.004px">m</span><span style="letter-spacing:-0.674px">ä</span><span style="letter-spacing:0.004px">r</span><span style="letter-spacing:-0.674px">e</span> <span style="letter-spacing:-1.0px">P</span><span style="letter-spacing:-0.674px">a</span><span style="letter-spacing:0.004px">r</span><span style="letter-spacing:0.666px">t</span><span style="letter-spacing:0.334px">i</span><span style="letter-spacing:0.666px">t</span><span style="letter-spacing:0.334px">i</span><span style="letter-spacing:0.326px">o</span></div>
<div style="left:864px;top:586px;width:156px;height:1px;background:#a0a0a0;"></div>
<div style="left:1019px;top:498px;width:1px;height:89px;background:#a0a0a0;"></div>
<div style="left:1110px;top:498px;width:1px;height:15px;background:#a0a0a0;"></div>
<div style="left:1020px;top:498px;width:90px;height:1px;background:#fff;"></div>
<div style="left:1020px;top:498px;width:1px;height:89px;background:#fff;"></div>
<div style="left:1021px;top:499px;width:89px;height:13px;background:#000080;"></div>
<div style="left:1020px;top:512px;width:91px;height:1px;background:#c0c0b8;"></div>
<div style="left:1021px;top:513px;width:89px;height:1px;background:#fafafa;"></div>
<div style="left:1024px;top:515px;width:83px;height:68px;background:#fff;"></div>
<div style="left:1024px;top:515px;width:83px;height:1px;background:#a0a0a0;"></div>
<div style="left:1024px;top:515px;width:1px;height:68px;background:#a0a0a0;"></div>
<div class="t" style="left:1028px;top:534px;width:77px;overflow:hidden;"><span style="letter-spacing:-0.674px">512</span> <span style="letter-spacing:0.004px">M</span><span style="letter-spacing:-1.0px">B</span></div>
<div class="t" style="left:1028px;top:549px;width:77px;overflow:hidden;"><span style="letter-spacing:-1.0px">F</span><span style="letter-spacing:-0.674px">e</span><span style="letter-spacing:0.326px">h</span><span style="letter-spacing:0.334px">l</span><span style="letter-spacing:-0.674px">e</span><span style="letter-spacing:0.004px">r</span><span style="letter-spacing:0.666px">f</span><span style="letter-spacing:0.004px">r</span><span style="letter-spacing:-0.674px">e</span><span style="letter-spacing:0.334px">i</span> <span style="letter-spacing:0.004px">(</span><span style="letter-spacing:-0.326px">W</span><span style="letter-spacing:0.334px">i</span><span style="letter-spacing:-0.674px">e</span></div>
<div style="left:1019px;top:586px;width:93px;height:1px;background:#a0a0a0;"></div>
<div style="left:1111px;top:498px;width:1px;height:89px;background:#a0a0a0;"></div>
<div style="left:1251px;top:498px;width:1px;height:15px;background:#a0a0a0;"></div>
<div style="left:1112px;top:498px;width:139px;height:1px;background:#fff;"></div>
<div style="left:1112px;top:498px;width:1px;height:89px;background:#fff;"></div>
<div style="left:1113px;top:499px;width:138px;height:13px;background:#000080;"></div>
<div style="left:1112px;top:512px;width:140px;height:1px;background:#c0c0b8;"></div>
<div style="left:1113px;top:513px;width:138px;height:1px;background:#fafafa;"></div>
<div style="left:1116px;top:515px;width:132px;height:68px;background:#fff;"></div>
<div style="left:1116px;top:515px;width:132px;height:1px;background:#a0a0a0;"></div>
<div style="left:1116px;top:515px;width:1px;height:68px;background:#a0a0a0;"></div>
<div class="t" style="left:1120px;top:534px;width:126px;overflow:hidden;"><span style="letter-spacing:-0.674px">14</span><span style="letter-spacing:-0.334px">,</span><span style="letter-spacing:-0.674px">00</span> <span style="letter-spacing:-1.0px">GB</span></div>
<div class="t" style="left:1120px;top:549px;width:126px;overflow:hidden;"><span style="letter-spacing:-1.0px">F</span><span style="letter-spacing:-0.674px">e</span><span style="letter-spacing:0.326px">h</span><span style="letter-spacing:0.334px">l</span><span style="letter-spacing:-0.674px">e</span><span style="letter-spacing:0.004px">r</span><span style="letter-spacing:0.666px">f</span><span style="letter-spacing:0.004px">r</span><span style="letter-spacing:-0.674px">e</span><span style="letter-spacing:0.334px">i</span> <span style="letter-spacing:0.004px">(</span><span style="letter-spacing:-0.326px">W</span><span style="letter-spacing:0.334px">i</span><span style="letter-spacing:-0.674px">e</span><span style="letter-spacing:0.326px">d</span><span style="letter-spacing:-0.674px">e</span><span style="letter-spacing:0.004px">r</span><span style="letter-spacing:0.326px">h</span><span style="letter-spacing:-0.674px">e</span><span style="letter-spacing:0.004px">r</span><span style="letter-spacing:-1px">s</span><span style="letter-spacing:0.666px">t</span><span style="letter-spacing:-0.674px">e</span></div>
<div style="left:1111px;top:586px;width:142px;height:1px;background:#a0a0a0;"></div>
<div style="left:1252px;top:498px;width:1px;height:89px;background:#a0a0a0;"></div>
<div style="left:1356px;top:498px;width:1px;height:15px;background:#a0a0a0;"></div>
<div style="left:1253px;top:498px;width:103px;height:1px;background:#fff;"></div>
<div style="left:1253px;top:498px;width:1px;height:89px;background:#fff;"></div>
<div style="left:1254px;top:499px;width:102px;height:13px;background:#000080;"></div>
<div style="left:1253px;top:512px;width:104px;height:1px;background:#c0c0b8;"></div>
<div style="left:1254px;top:513px;width:102px;height:1px;background:#fafafa;"></div>
<div style="left:1257px;top:515px;width:96px;height:68px;background:#fff;"></div>
<div style="left:1257px;top:515px;width:96px;height:1px;background:#a0a0a0;"></div>
<div style="left:1257px;top:515px;width:1px;height:68px;background:#a0a0a0;"></div>
<div class="t" style="left:1261px;top:534px;width:90px;overflow:hidden;"><span style="letter-spacing:-0.674px">1</span><span style="letter-spacing:-0.334px">,</span><span style="letter-spacing:-0.674px">00</span> <span style="letter-spacing:-1.0px">GB</span></div>
<div class="t" style="left:1261px;top:549px;width:90px;overflow:hidden;"><span style="letter-spacing:-1.0px">F</span><span style="letter-spacing:-0.674px">e</span><span style="letter-spacing:0.326px">h</span><span style="letter-spacing:0.334px">l</span><span style="letter-spacing:-0.674px">e</span><span style="letter-spacing:0.004px">r</span><span style="letter-spacing:0.666px">f</span><span style="letter-spacing:0.004px">r</span><span style="letter-spacing:-0.674px">e</span><span style="letter-spacing:0.334px">i</span> <span style="letter-spacing:0.004px">(</span><span style="letter-spacing:-0.326px">W</span><span style="letter-spacing:0.334px">i</span><span style="letter-spacing:-0.674px">e</span><span style="letter-spacing:0.326px">d</span><span style="letter-spacing:-0.674px">e</span></div>
<div style="left:1252px;top:586px;width:106px;height:1px;background:#a0a0a0;"></div>
<div style="left:1357px;top:498px;width:1px;height:89px;background:#a0a0a0;"></div>
<div style="left:337px;top:593px;width:925px;height:1px;background:#fff;"></div>
<div style="left:337px;top:593px;width:1px;height:96px;background:#fff;"></div>
<div style="left:337px;top:690px;width:123px;height:1px;background:#a0a0a0;"></div>
<div style="left:461px;top:689px;width:801px;height:1px;background:#a0a0a0;"></div>
<div style="left:460px;top:594px;width:1px;height:98px;background:#a0a0a0;"></div>
<div style="left:457px;top:593px;width:1px;height:96px;background:#fff;"></div>
<svg style="left:348px;top:601px" width="14" height="8" viewBox="0 0 14 8" shape-rendering="crispEdges">
<rect x="1" y="0" width="12" height="2" fill="#d3d6da"/>
<rect x="0" y="2" width="14" height="2" fill="#d9dce0"/>
<rect x="0" y="4" width="14" height="3" fill="#dcdfe3"/>
<rect x="1" y="4" width="12" height="3" fill="#505050"/>
<rect x="2" y="5" width="8" height="1" fill="#636363"/>
<rect x="0" y="7" width="14" height="1" fill="#eceef1"/></svg>
<div class="t" style="left:364px;top:601px;font-weight:bold;letter-spacing:0.22px;">Datenträger 1</div>
<div class="t" style="left:346px;top:616px;"><span style="letter-spacing:-0.326px">W</span><span style="letter-spacing:-0.674px">e</span>c<span style="letter-spacing:0.326px">h</span><span style="letter-spacing:-1px">s</span><span style="letter-spacing:-0.674px">e</span><span style="letter-spacing:0.334px">l</span><span style="letter-spacing:0.004px">m</span><span style="letter-spacing:-0.674px">e</span><span style="letter-spacing:0.326px">d</span><span style="letter-spacing:0.334px">i</span><span style="letter-spacing:0.326px">u</span><span style="letter-spacing:0.004px">m</span></div>
<div class="t" style="left:346px;top:631px;"><span style="letter-spacing:-0.674px">60</span><span style="letter-spacing:-0.334px">,</span><span style="letter-spacing:-0.674px">37</span> <span style="letter-spacing:-1.0px">GB</span></div>
<div class="t" style="left:346px;top:646px;"><span style="letter-spacing:-0.334px">O</span><span style="letter-spacing:0.326px">n</span><span style="letter-spacing:0.334px">li</span><span style="letter-spacing:0.326px">n</span><span style="letter-spacing:-0.674px">e</span></div>
<div style="left:460px;top:597px;width:1px;height:89px;background:#a0a0a0;"></div>
<div style="left:619px;top:597px;width:1px;height:15px;background:#a0a0a0;"></div>
<div style="left:461px;top:597px;width:158px;height:1px;background:#fff;"></div>
<div style="left:461px;top:597px;width:1px;height:89px;background:#fff;"></div>
<div style="left:462px;top:598px;width:157px;height:13px;background:#000;"></div>
<div style="left:461px;top:611px;width:159px;height:1px;background:#c0c0b8;"></div>
<div style="left:462px;top:612px;width:157px;height:1px;background:#fafafa;"></div>
<div style="left:465px;top:614px;width:151px;height:68px;background:#fff;"></div>
<div style="left:465px;top:614px;width:151px;height:1px;background:#a0a0a0;"></div>
<div style="left:465px;top:614px;width:1px;height:68px;background:#a0a0a0;"></div>
<div class="t" style="left:469px;top:633px;width:145px;overflow:hidden;"><span style="letter-spacing:-0.674px">16</span> <span style="letter-spacing:0.004px">M</span><span style="letter-spacing:-1.0px">B</span></div>
<div class="t" style="left:469px;top:648px;width:145px;overflow:hidden;"><span style="letter-spacing:0.334px">Ni</span>c<span style="letter-spacing:0.326px">h</span><span style="letter-spacing:0.666px">t</span> <span style="letter-spacing:-1px">z</span><span style="letter-spacing:0.326px">ug</span><span style="letter-spacing:-0.674px">e</span><span style="letter-spacing:0.326px">o</span><span style="letter-spacing:0.004px">r</span><span style="letter-spacing:0.326px">dn</span><span style="letter-spacing:-0.674px">e</span><span style="letter-spacing:0.666px">t</span></div>
<div style="left:460px;top:685px;width:161px;height:1px;background:#a0a0a0;"></div>
<div style="left:620px;top:597px;width:1px;height:89px;background:#a0a0a0;"></div>
<div style="left:1256px;top:597px;width:1px;height:15px;background:#a0a0a0;"></div>
<div style="left:621px;top:597px;width:635px;height:1px;background:#fff;"></div>
<div style="left:621px;top:597px;width:1px;height:89px;background:#fff;"></div>
<div style="left:622px;top:598px;width:634px;height:13px;background:#000080;"></div>
<div style="left:621px;top:611px;width:636px;height:1px;background:#c0c0b8;"></div>
<div style="left:622px;top:612px;width:634px;height:1px;background:#fafafa;"></div>
<div style="left:621px;top:612px;width:636px;height:73px;background:#bdbdbd;"></div>
<div style="left:625px;top:614px;width:629px;height:68px;background:#a6a6a6;"></div>
<svg style="left:626px;top:615px" width="627" height="66" shape-rendering="crispEdges"><rect width="100%" height="100%" fill="url(#hatch)"/></svg>
<div class="t" style="left:629px;top:618px;font-weight:bold;background:#fff;">&nbsp;&nbsp;<span style="letter-spacing:-0.6px">(E:)</span></div>
<div class="t" style="left:629px;top:633px;background:#fff;"><span style="letter-spacing:-0.674px">60</span><span style="letter-spacing:-0.334px">,</span><span style="letter-spacing:-0.674px">36</span> <span style="letter-spacing:-1.0px">GB</span> <span style="letter-spacing:-0.674px">e</span><span style="letter-spacing:-1px">xF</span><span style="letter-spacing:-0.004px">A</span><span style="letter-spacing:-1.0px">T</span></div>
<div class="t" style="left:629px;top:648px;background:#fff;"><span style="letter-spacing:-1.0px">F</span><span style="letter-spacing:-0.674px">e</span><span style="letter-spacing:0.326px">h</span><span style="letter-spacing:0.334px">l</span><span style="letter-spacing:-0.674px">e</span><span style="letter-spacing:0.004px">r</span><span style="letter-spacing:0.666px">f</span><span style="letter-spacing:0.004px">r</span><span style="letter-spacing:-0.674px">e</span><span style="letter-spacing:0.334px">i</span> <span style="letter-spacing:0.004px">(</span><span style="letter-spacing:-1.0px">P</span><span style="letter-spacing:0.004px">r</span><span style="letter-spacing:0.334px">i</span><span style="letter-spacing:0.004px">m</span><span style="letter-spacing:-0.674px">ä</span><span style="letter-spacing:0.004px">r</span><span style="letter-spacing:-0.674px">e</span> <span style="letter-spacing:-1.0px">P</span><span style="letter-spacing:-0.674px">a</span><span style="letter-spacing:0.004px">r</span><span style="letter-spacing:0.666px">t</span><span style="letter-spacing:0.334px">i</span><span style="letter-spacing:0.666px">t</span><span style="letter-spacing:0.334px">i</span><span style="letter-spacing:0.326px">on</span><span style="letter-spacing:0.004px">)</span></div>
<div style="left:620px;top:685px;width:638px;height:1px;background:#a0a0a0;"></div>
<div style="left:1257px;top:597px;width:1px;height:89px;background:#a0a0a0;"></div>
<div style="left:1257px;top:597px;width:1px;height:88px;background:#fff;"></div>
<div style="left:1260px;top:593px;width:1px;height:96px;background:#fff;"></div>
<div style="left:461px;top:688px;width:800px;height:1px;background:#fff;"></div>
<div style="left:1261px;top:593px;width:1px;height:97px;background:#a0a0a0;"></div>
<div style="left:1360px;top:488px;width:1px;height:215px;background:#fff;"></div>
<div style="left:1361px;top:488px;width:16px;height:215px;background:#f0f0f0;"></div>
<div style="left:1377px;top:488px;width:1px;height:215px;background:#e3e3e3;"></div>
<div style="left:1361px;top:505px;width:15px;height:91px;background:#cdcdcd;"></div>
<svg style="left:1364px;top:491px" width="10" height="10" viewBox="0 0 10 10"><path d="M1.3 7.6L4.8 3.6L8.3 7.6" stroke="#5a5a5a" stroke-width="1.9" fill="none"/></svg>
<svg style="left:1364px;top:690px" width="10" height="10" viewBox="0 0 10 10"><path d="M1.3 2.4L4.8 6.4L8.3 2.4" stroke="#5a5a5a" stroke-width="1.9" fill="none"/></svg>
<div style="left:337px;top:703px;width:1040px;height:1px;background:#fff;"></div>
<div style="left:336px;top:703px;width:1px;height:20px;background:#696969;"></div>
<div style="left:336px;top:722px;width:1041px;height:1px;background:#a0a0a0;"></div>
<div style="left:1376px;top:703px;width:1px;height:20px;background:#a0a0a0;"></div>
<div style="left:342px;top:706px;width:12px;height:14px;background:#e8e8e8;"></div>
<div style="left:343px;top:707px;width:10px;height:12px;background:#000;"></div>
<div class="t" style="left:358px;top:706px;"><span style="letter-spacing:0.334px">Ni</span>c<span style="letter-spacing:0.326px">h</span><span style="letter-spacing:0.666px">t</span> <span style="letter-spacing:-1px">z</span><span style="letter-spacing:0.326px">ug</span><span style="letter-spacing:-0.674px">e</span><span style="letter-spacing:0.326px">o</span><span style="letter-spacing:0.004px">r</span><span style="letter-spacing:0.326px">dn</span><span style="letter-spacing:-0.674px">e</span><span style="letter-spacing:0.666px">t</span></div>
<div style="left:455px;top:706px;width:12px;height:14px;background:#e8e8e8;"></div>
<div style="left:456px;top:707px;width:10px;height:12px;background:#000080;"></div>
<div class="t" style="left:471px;top:706px;"><span style="letter-spacing:-1.0px">P</span><span style="letter-spacing:0.004px">r</span><span style="letter-spacing:0.334px">i</span><span style="letter-spacing:0.004px">m</span><span style="letter-spacing:-0.674px">ä</span><span style="letter-spacing:0.004px">r</span><span style="letter-spacing:-0.674px">e</span> <span style="letter-spacing:-1.0px">P</span><span style="letter-spacing:-0.674px">a</span><span style="letter-spacing:0.004px">r</span><span style="letter-spacing:0.666px">t</span><span style="letter-spacing:0.334px">i</span><span style="letter-spacing:0.666px">t</span><span style="letter-spacing:0.334px">i</span><span style="letter-spacing:0.326px">on</span></div>
<div style="left:335px;top:724px;width:1043px;height:1px;background:#fff;"></div>
<div style="left:335px;top:725px;width:1043px;height:1px;background:#dadada;"></div>
<div style="left:335px;top:724px;width:1px;height:24px;background:#fff;"></div>
<div style="left:1158px;top:727px;width:1px;height:20px;background:#d9d9d9;"></div>
<div style="left:1291px;top:727px;width:1px;height:20px;background:#d9d9d9;"></div>
<div style="left:1376px;top:727px;width:1px;height:20px;background:#d9d9d9;"></div>
<div style="left:335px;top:747px;width:1044px;height:1px;background:#fff;"></div>
</body></html>
